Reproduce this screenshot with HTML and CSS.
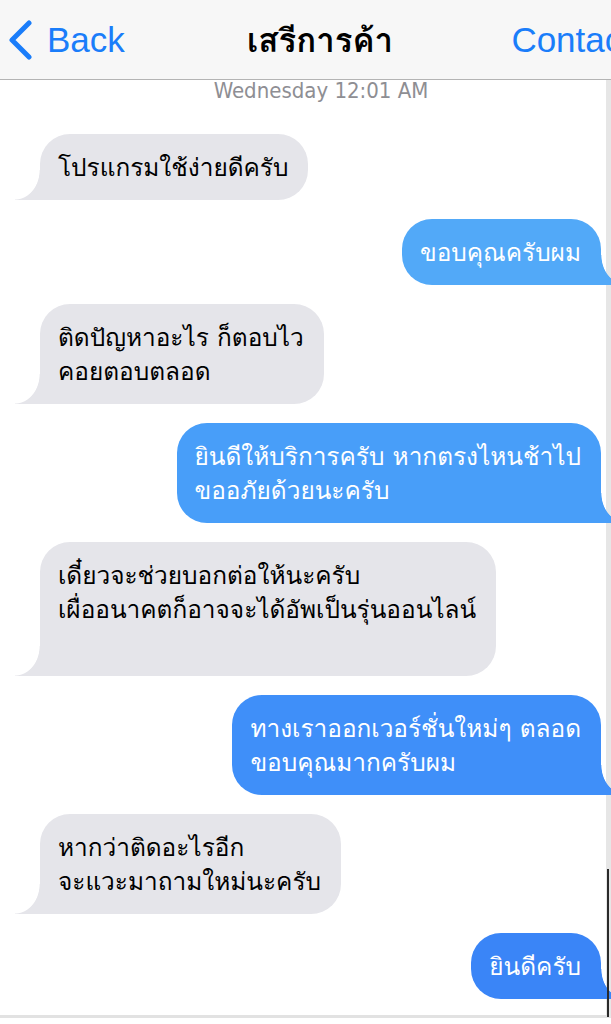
FILE: index.html
```html
<!DOCTYPE html>
<html lang="th">
<head>
    <meta charset="UTF-8">
    <meta name="viewport" content="width=device-width, initial-scale=1.0">
    <title>เสรีการค้า</title>
    <link rel="stylesheet" href="styles.css">
</head>
<body>
    <div class="nav">
        <a class="nav-back" href="#">
            <svg class="chevron" width="26" height="40" viewBox="0 0 26 40">
                <path d="M21 3 L4 20 L21 37" />
            </svg>
            <span>Back</span>
        </a>
        <div class="nav-title">เสรีการค้า</div>
        <a class="nav-contact" href="#">Contact</a>
    </div>

    <div class="chat">
        <div class="stamp">Wednesday 12:01 AM</div>

        <div class="thread">
            <div class="msg them">โปรแกรมใช้ง่ายดีครับ</div>
            <div class="msg me me-1">ขอบคุณครับผม</div>
            <div class="msg them">ติดปัญหาอะไร ก็ตอบไว<br>คอยตอบตลอด</div>
            <div class="msg me me-2">ยินดีให้บริการครับ หากตรงไหนช้าไป<br>ขออภัยด้วยนะครับ</div>
            <div class="msg them msg-extra">เดี๋ยวจะช่วยบอกต่อให้นะครับ<br>เผื่ออนาคตก็อาจจะได้อัพเป็นรุ่นออนไลน์</div>
            <div class="msg me me-3">ทางเราออกเวอร์ชั่นใหม่ๆ ตลอด<br>ขอบคุณมากครับผม</div>
            <div class="msg them">หากว่าติดอะไรอีก<br>จะแวะมาถามใหม่นะครับ</div>
            <div class="msg me me-4">ยินดีครับ</div>
        </div>

        <div class="scroll-thumb"></div>
    </div>
</body>
</html>
```

FILE: styles.css
```css
body {
    margin: 0;
    width: 611px;
    height: 1024px;
    overflow: hidden;
    background: #fff;
    font-family: Tahoma, Loma, "Noto Sans Thai Looped", Garuda, "Noto Sans", "Noto Sans Thai", sans-serif;
}
a {
    text-decoration: none;
}

/* top bar, wider than the window: the right side is cut off */
.nav {
    width: 640px;
    height: 80px;
    box-sizing: border-box;
    padding: 0 8px;
    display: grid;
    grid-template-columns: 1fr auto 1fr;
    align-items: center;
    background: #f7f7f7;
    border-bottom: 1px solid #b4b4b4;
}
.nav-back, .nav-contact {
    font-family: "Liberation Sans", Arial, sans-serif;
    font-size: 35px;
    color: #1a7dfa;
}
.nav-back {
    display: flex;
    align-items: center;
    gap: 13px;
}
.chevron path {
    fill: none;
    stroke: #1a7dfa;
    stroke-width: 5;
    stroke-linecap: round;
    stroke-linejoin: round;
}
.nav-title {
    font-size: 33px;
    font-weight: bold;
    color: #000;
    margin-top: 2px;
}
.nav-contact {
    justify-self: end;
}

/* message area */
.chat {
    position: relative;
    height: 938px;
    box-sizing: border-box;
    padding: 0 5px 0 40px;
    border-right: 5px solid #e6e6e6;
    border-bottom: 3px solid #e2e2e2;
}
.stamp {
    width: 642px;
    margin-left: -40px;
    text-align: center;
    font-family: "DejaVu Sans Condensed", "Liberation Sans", sans-serif;
    font-size: 22px;
    line-height: 22px;
    color: #8e8e93;
}
.thread {
    display: flex;
    flex-direction: column;
    gap: 19px;
    margin-top: 32px;
}
.msg {
    position: relative;
    padding: 17px 20px 15px 18px;
    border-radius: 30px;
    font-size: 24.4px;
    line-height: 34px;
    white-space: nowrap;
}
.msg::before {
    content: "";
    position: absolute;
    bottom: 0;
    width: 26px;
    height: 30px;
}
.msg-extra {
    padding-bottom: 49px;
}

.them {
    align-self: flex-start;
    background: #e5e5ea;
    color: #000;
    border-bottom-left-radius: 0;
}
.them::before {
    left: -25px;
    background: radial-gradient(ellipse 25px 30px at 0 0, transparent 97%, #e5e5ea 100%);
}

.me {
    align-self: flex-end;
    color: #fff;
    border-bottom-right-radius: 0;
}
.me::before {
    right: -25px;
    background: radial-gradient(ellipse 25px 30px at 100% 0, transparent 97%, var(--bubble) 100%);
}
.me-1 { --bubble: #52a9f8; background: var(--bubble); }
.me-2 { --bubble: #489ef9; background: var(--bubble); }
.me-3 { --bubble: #3f8ff9; background: var(--bubble); }
.me-4 { --bubble: #3a85f7; background: var(--bubble); }

.scroll-thumb {
    position: absolute;
    right: -3px;
    top: 789px;
    width: 2px;
    height: 148px;
    background: #2a2a2a;
}
```
